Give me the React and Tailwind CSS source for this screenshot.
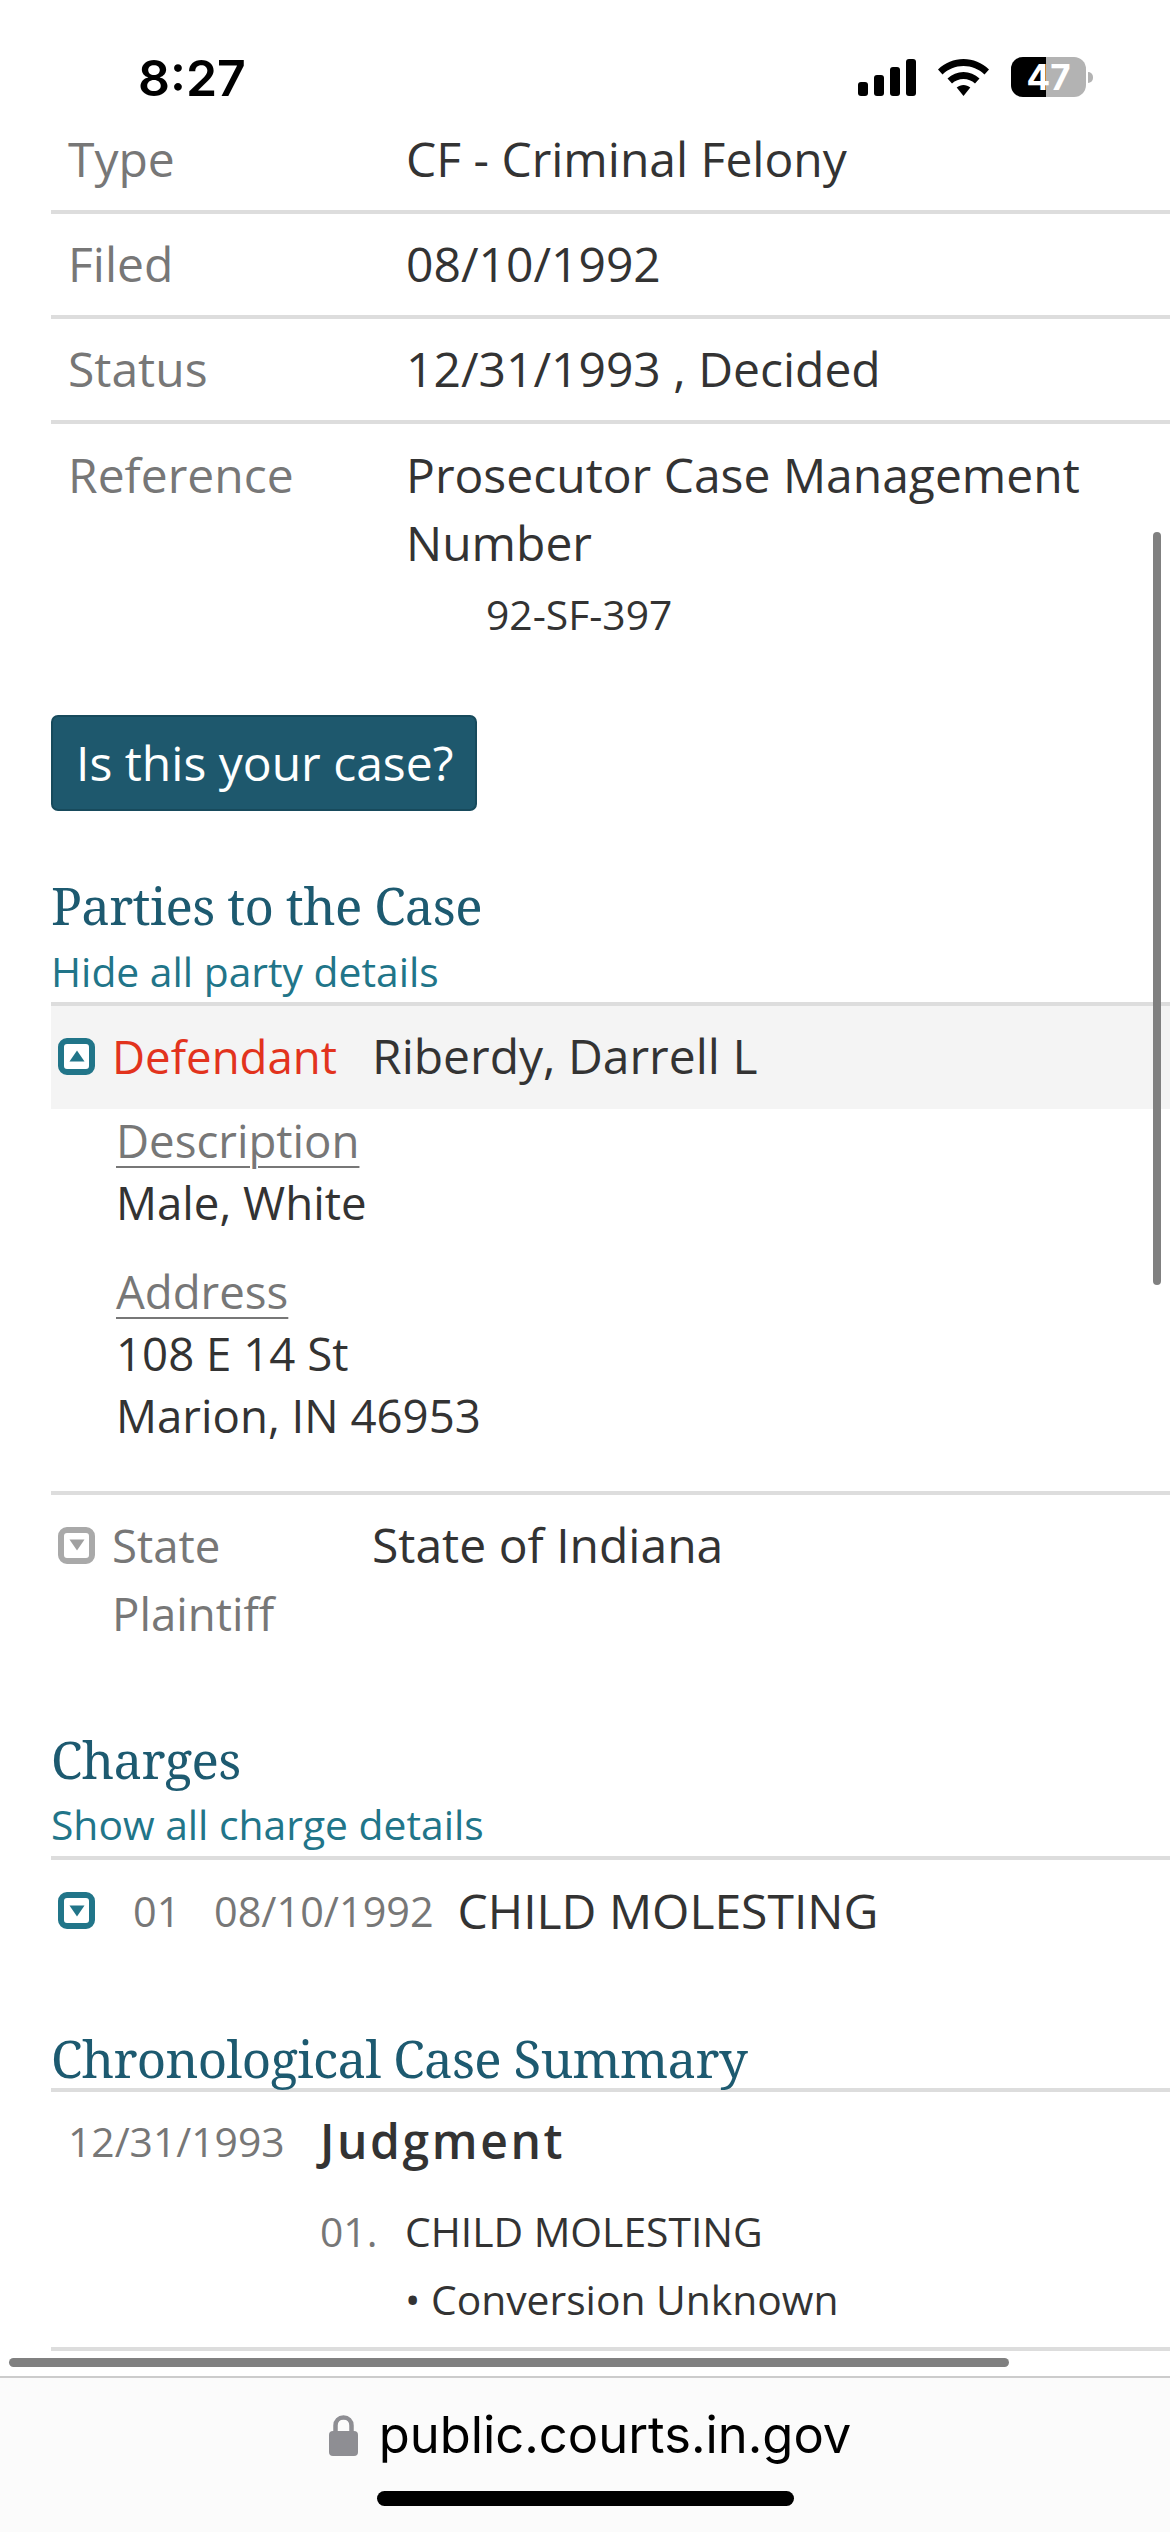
const sans = "font-['Open_Sans',sans-serif]";
const serif = "font-['Noto_Serif','Droid_Serif','DejaVu_Serif',serif]";

const ToggleIcon = ({ up = false, gray = false }) => (
  <div className={`flex h-[37px] w-[37px] shrink-0 items-center justify-center rounded-[9px] border-[6px] bg-white ${gray ? 'border-[#a9a9a9]' : 'border-[#217589]'}`}>
    <svg width="16" height="12" viewBox="0 0 16 12" className={up ? 'rotate-180' : ''}>
      <path d="M0.5 0.5h15L8 11.5z" fill={gray ? '#a0a0a0' : '#217589'} />
    </svg>
  </div>
);

const InfoRow = ({ label, children, last = false }) => (
  <div className={`flex pl-[17px] ${last ? 'pt-[16.5px]' : 'pt-4 pb-[16.5px] border-b-4 border-[#dddddd]'}`}>
    <div className="w-[338px] shrink-0 text-[#777777]">{label}</div>
    <div className="w-[690px] shrink-0">{children}</div>
  </div>
);

const SectionTitle = ({ children }) => (
  <h2 className={`${serif} text-[51px] leading-[59px] tracking-[-0.65px] text-[#1d5a70] whitespace-nowrap`}>{children}</h2>
);

const SectionLink = ({ children }) => (
  <a className="mt-[5.5px] block text-[40.8px] leading-[61.5px] text-[#217589]">{children}</a>
);

const StatusIcons = () => (
  <div className="flex items-center">
    <svg width="58" height="37" viewBox="0 0 58 37" fill="black">
      <rect x="0" y="23" width="10" height="14" rx="3" />
      <rect x="16" y="16" width="10" height="21" rx="3" />
      <rect x="32" y="8" width="10" height="29" rx="3" />
      <rect x="48" y="0" width="10" height="37" rx="3" />
    </svg>
    <svg width="51" height="37" viewBox="0 0 51 37" className="ml-[22px]" fill="black">
      <path d="M25.5 0C35 0 44 3.800 51 10.500L46.500 15.500C40.800 10 33.500 7 25.500 7S10.200 10 4.500 15.500L0 10.500C7 3.800 16 0 25.500 0Z" />
      <path d="M25.500 13C31.500 13 37 15.300 41.500 19.500L37 24.500C33.800 21.500 29.900 20 25.500 20S17.200 21.500 14 24.500L9.500 19.500C14 15.300 19.500 13 25.500 13Z" />
      <path d="M25.500 26C28 26 30.300 26.900 32.300 28.600L25.500 37L18.700 28.600C20.700 26.900 23 26 25.500 26Z" />
    </svg>
    <div className="relative ml-[22px] h-[40px] w-[75px] overflow-hidden rounded-[12px] bg-[#b3b3b3]">
      <div className="h-full w-[35px] bg-black" />
      <span className="absolute inset-0 flex items-center justify-center font-['Inter',sans-serif] text-[35px] font-bold leading-none text-white">47</span>
    </div>
    <div className="ml-[2px] h-[11px] w-[5px] rounded-r-full bg-[#b3b3b3]" />
  </div>
);

export default function App() {
  return (
    <div className={`${sans} relative flex h-[2532px] w-[1170px] flex-col overflow-hidden bg-white text-[48px] leading-[68.5px] text-[#333333]`}>
      {/* status bar */}
      <div className="flex h-[109px] shrink-0 items-start justify-between pl-[138px] pr-[77px] pt-[50px]">
        <div className="font-['Inter',sans-serif] text-[50px] font-semibold leading-[56px] text-black">8:27</div>
        <div className="pt-[7px]"><StatusIcons /></div>
      </div>

      <div className="min-h-0 flex-1 overflow-hidden pl-[51px]">
        <div className="w-[1119px]">
          <InfoRow label="Type">CF - Criminal Felony</InfoRow>
          <InfoRow label="Filed">08/10/1992</InfoRow>
          <InfoRow label="Status">12/31/1993 , Decided</InfoRow>
          <InfoRow label="Reference" last>
            Prosecutor Case Management Number
            <div className="mt-[6px] pl-[80px] text-[40.8px] leading-[60px]">92-SF-397</div>
          </InfoRow>

          <button className="mt-[71.5px] block h-[96px] w-[426px] rounded-[7px] border-2 border-[#174a5c] bg-[#1e586d] text-left pl-[23px] text-[48px] leading-[68.5px] text-white">
            Is this your case?
          </button>

          {/* parties */}
          <div className="mt-[65px]">
            <SectionTitle>Parties to the Case</SectionTitle>
            <SectionLink>Hide all party details</SectionLink>
          </div>
          <div className="flex items-center border-t-4 border-[#dddddd] bg-[#f4f4f4] pb-[18.5px] pt-4 pl-[7px]">
            <ToggleIcon up />
            <div className="ml-[17px] w-[260px] text-[45.6px] text-[#e2331d]">Defendant</div>
            <div>Riberdy, Darrell L</div>
          </div>
          <div className="border-b-4 border-[#dddddd] pb-[44.5px] pl-[65px] text-[45.6px] leading-[62px]">
            <div className="text-[#777777] underline underline-offset-[8px] decoration-2">Description</div>
            <div>Male, White</div>
            <div className="mt-[27px] text-[#777777] underline underline-offset-[8px] decoration-2">Address</div>
            <div>108 E 14 St</div>
            <div>Marion, IN 46953</div>
          </div>
          <div className="flex items-start pl-[7px] pt-[16px]">
            <div className="pt-[16px]"><ToggleIcon gray /></div>
            <div className="ml-[17px] w-[260px] text-[45.6px] text-[#777777]">State<br />Plaintiff</div>
            <div>State of Indiana</div>
          </div>

          {/* charges */}
          <div className="mt-[82px]">
            <SectionTitle>Charges</SectionTitle>
            <SectionLink>Show all charge details</SectionLink>
          </div>
          <div className="flex items-center border-t-4 border-[#dddddd] pb-[18px] pt-[17px] pl-[7px]">
            <ToggleIcon />
            <div className="ml-[38px] w-[81px] text-[41.4px] text-[#777777]">01</div>
            <div className="w-[243.5px] text-[41.4px] text-[#777777]">08/10/1992</div>
            <div>CHILD MOLESTING</div>
          </div>

          {/* case summary */}
          <div className="mt-[66px]">
            <SectionTitle>Chronological Case Summary</SectionTitle>
          </div>
          <div className="border-t-4 border-b-4 border-[#dddddd] pb-[18px] pl-[17px] pt-[15px]">
            <div className="flex items-center">
              <div className="w-[252px] text-[40.8px] text-[#777777]">12/31/1993</div>
              <div className="font-semibold tracking-[2.6px]">Judgment</div>
            </div>
            <div className="ml-[252px] mt-[25px] flex text-[40.8px] leading-[60px]">
              <div className="w-[85px] text-[#777777]">01.</div>
              <div>
                <div>CHILD MOLESTING</div>
                <div className="mt-2">• Conversion Unknown</div>
              </div>
            </div>
          </div>
        </div>
      </div>

      {/* safari address bar */}
      <div className="relative flex h-[156px] shrink-0 flex-col items-center border-t-2 border-[#cccccc] bg-[#fbfbfb]">
        <div className="ml-[10px] mt-[26px] flex items-center">
          <svg width="29" height="41" viewBox="0 0 29 41" fill="none">
            <path d="M6.500 18V10.500C6.500 5.800 9.800 2.500 14.500 2.500S22.500 5.800 22.500 10.500V18" stroke="#8e8e93" strokeWidth="4.500" />
            <rect x="0" y="16" width="29" height="25" rx="4" fill="#8e8e93" />
          </svg>
          <span className="ml-[21px] font-['Inter',sans-serif] text-[50.7px] leading-[62px] text-black">public.courts.in.gov</span>
        </div>
        <div className="mt-[25px] h-[15px] w-[417px] rounded-full bg-black" />
      </div>

      {/* scroll indicators */}
      <div className="absolute left-[1153px] top-[532px] h-[753px] w-[8px] rounded-full bg-[#808080]" />
      <div className="absolute left-[9px] top-[2358px] h-[9px] w-[1000px] rounded-full bg-[#808080]" />
    </div>
  );
}
